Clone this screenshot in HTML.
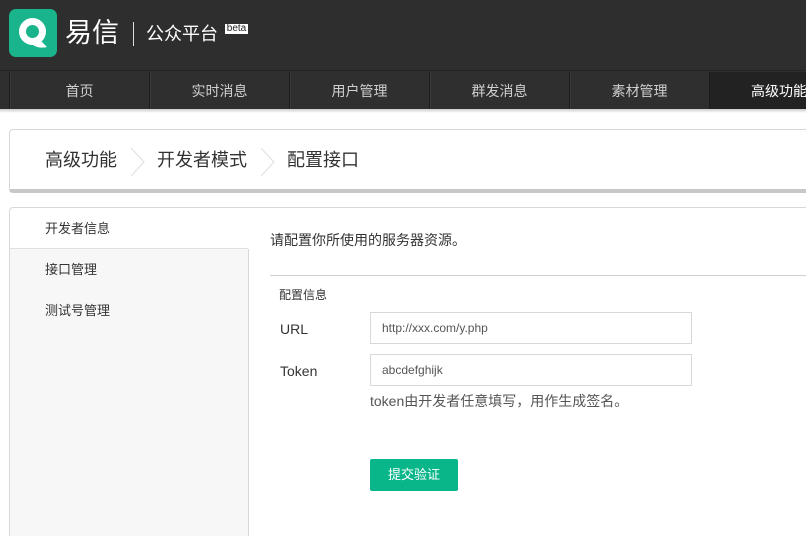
<!DOCTYPE html>
<html><head><meta charset="utf-8"><style>
*{margin:0;padding:0;box-sizing:border-box}
html,body{width:806px;height:536px;overflow:hidden}
body{background:#fff;font-family:"Liberation Sans","Noto Sans CJK SC",sans-serif;position:relative}
.hdr{position:absolute;left:0;top:0;width:806px;height:70px;background:#2e2e2e}
.nav{position:absolute;left:0;top:70px;width:806px;height:39px;background:#2f2f2f;border-top:1px solid #242424}
.tab{position:absolute;top:1px;height:37px;width:140px;border-left:1px solid #1c1c1c;box-shadow:inset 1px 0 0 #3a3a3a;color:#d0d0d0;font-size:14px;text-align:center;line-height:38px}
.tab.on{background:#222;color:#fff;box-shadow:none}
.abs{position:absolute}
</style></head><body>
<div class="hdr">
 <div class="abs" style="left:9px;top:9px;width:48px;height:48px;border-radius:7px;background:#19b48c"></div>
 <svg class="abs" style="left:9px;top:9px" width="48" height="48" viewBox="0 0 48 48">
  <circle cx="23.5" cy="22.5" r="10" fill="none" stroke="#fff" stroke-width="7"/>
  <path d="M20 31 Q26 34 30 30 L38 38 Q30 40 24 36 Z" fill="#fff"/>
 </svg>
 <div class="abs" style="left:65px;top:14px;color:#fff;font-size:27px;line-height:38px">易信</div>
 <div class="abs" style="left:133px;top:22px;width:1px;height:24px;background:#ddd"></div>
 <div class="abs" style="left:146px;top:22px;color:#fff;font-size:18px;line-height:24px">公众平台</div>
 <div class="abs" style="left:225px;top:24px;width:23px;height:10px;background:#fff;color:#222;font-size:10px;line-height:10px;text-align:center">beta</div>
</div>
<div class="nav">
 <div class="tab" style="left:9px">首页</div>
 <div class="tab" style="left:149px">实时消息</div>
 <div class="tab" style="left:289px">用户管理</div>
 <div class="tab" style="left:429px">群发消息</div>
 <div class="tab" style="left:569px">素材管理</div>
 <div class="tab on" style="left:709px;width:120px;text-align:left;padding-left:41px">高级功能</div>
</div>
<div class="abs" style="left:0;top:109px;width:806px;height:4px;background:linear-gradient(#ccc,#fff)"></div>
<div class="abs" style="left:9px;top:129px;width:810px;height:64px;border:1px solid #d8d8d8;border-bottom:4px solid #c8c8c8;border-radius:4px;background:#fff"></div>
<div class="abs" style="left:45px;top:148px;font-size:18px;color:#333;line-height:24px">高级功能</div>
<svg class="abs" style="left:129px;top:147px" width="18" height="30"><path d="M2 1l13 14L2 29" fill="none" stroke="#e2e2e2" stroke-width="1.2"/></svg>
<div class="abs" style="left:157px;top:148px;font-size:18px;color:#333;line-height:24px">开发者模式</div>
<svg class="abs" style="left:259px;top:147px" width="18" height="30"><path d="M2 1l13 14L2 29" fill="none" stroke="#e2e2e2" stroke-width="1.2"/></svg>
<div class="abs" style="left:287px;top:148px;font-size:18px;color:#333;line-height:24px">配置接口</div>
<div class="abs" style="left:9px;top:207px;width:810px;height:340px;border:1px solid #d8d8d8;border-radius:4px;background:#fff"></div>
<div class="abs" style="left:10px;top:248px;width:239px;height:300px;background:#f7f7f7;border-top:1px solid #e0e0e0;border-right:1px solid #d8d8d8"></div>
<div class="abs" style="left:248px;top:208px;width:1px;height:41px;background:#fff"></div>
<div class="abs" style="left:45px;top:220px;font-size:13px;color:#333;line-height:18px">开发者信息</div>
<div class="abs" style="left:45px;top:261px;font-size:13px;color:#333;line-height:18px">接口管理</div>
<div class="abs" style="left:45px;top:302px;font-size:13px;color:#333;line-height:18px">测试号管理</div>
<div class="abs" style="left:270px;top:230px;font-size:14px;color:#333;line-height:20px">请配置你所使用的服务器资源。</div>
<div class="abs" style="left:270px;top:275px;width:540px;height:1px;background:#d0d0d0"></div>
<div class="abs" style="left:279px;top:287px;font-size:12px;color:#333;line-height:16px">配置信息</div>
<div class="abs" style="left:280px;top:319px;font-size:14px;color:#333;line-height:20px">URL</div>
<div class="abs" style="left:370px;top:312px;width:322px;height:32px;border:1px solid #d8d8d8;font-size:12px;color:#555;line-height:30px;padding-left:11px">http://xxx.com/y.php</div>
<div class="abs" style="left:280px;top:361px;font-size:14px;color:#333;line-height:20px">Token</div>
<div class="abs" style="left:370px;top:354px;width:322px;height:32px;border:1px solid #d8d8d8;font-size:12px;color:#555;line-height:30px;padding-left:11px">abcdefghijk</div>
<div class="abs" style="left:370px;top:391px;font-size:14px;color:#555;line-height:20px">token由开发者任意填写，用作生成签名。</div>
<div class="abs" style="left:370px;top:459px;width:88px;height:32px;background:#08b68a;border-radius:2px;color:#fff;font-size:13px;line-height:32px;text-align:center">提交验证</div>
</body></html>
